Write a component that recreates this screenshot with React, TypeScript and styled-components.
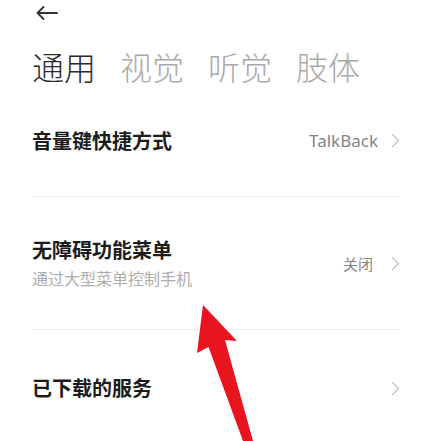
import { createGlobalStyle, styled } from "styled-components";

const GlobalStyle = createGlobalStyle`
  html, body {
    margin: 0;
    padding: 0;
    background: #ffffff;
  }
  body {
    font-family: "Noto Sans", "Noto Sans CJK SC", sans-serif;
    overflow: hidden;
  }
`;

interface TabProps {
  $active?: boolean;
}

const tabs = ["通用", "视觉", "听觉", "肢体"];

const Chevron = () => (
  <svg width="9" height="15" viewBox="0 0 9 15" fill="none">
    <path d="M1.5 1.5 L7.5 7.5 L1.5 13.5" stroke="#c4c4c4" strokeWidth="1.4" strokeLinecap="round" strokeLinejoin="round" />
  </svg>
);

const BackArrow = () => (
  <svg width="24" height="16" viewBox="0 0 24 16" fill="none">
    <path d="M22 8 H2.5 M8.5 2 L2.5 8 L8.5 14" stroke="#333" strokeWidth="1.8" strokeLinecap="round" strokeLinejoin="round" />
  </svg>
);

const App = () => {
  return (
    <>
      <GlobalStyle />
      <S.Page>
        <S.Header>
          <BackArrow />
        </S.Header>
        <S.Tabs>
          {tabs.map((tab, i) => (
            <S.Tab key={tab} $active={i === 0}>
              {tab}
            </S.Tab>
          ))}
        </S.Tabs>
        <S.List>
          <S.Row $height={112}>
            <S.TextBlock>
              <S.Title>音量键快捷方式</S.Title>
            </S.TextBlock>
            <S.Value $gap={13}>
              <S.Latin>TalkBack</S.Latin>
              <Chevron />
            </S.Value>
          </S.Row>
          <S.Row $height={133}>
            <S.TextBlock>
              <S.Title>无障碍功能菜单</S.Title>
              <S.Subtitle>通过大型菜单控制手机</S.Subtitle>
            </S.TextBlock>
            <S.Value $gap={18}>
              关闭
              <Chevron />
            </S.Value>
          </S.Row>
          <S.Row $height={116}>
            <S.TextBlock>
              <S.Title>已下载的服务</S.Title>
            </S.TextBlock>
            <S.Value $gap={0}>
              <Chevron />
            </S.Value>
          </S.Row>
        </S.List>
        <S.Pointer viewBox="0 0 432 441" width="432" height="441">
          <polygon
            points="203,305 237,341 225,340 253,441 243,441 208.5,347 197,353"
            fill="#e8141f"
          />
        </S.Pointer>
      </S.Page>
    </>
  );
};

export default App;

interface RowProps {
  $height: number;
}

interface ValueProps {
  $gap: number;
}

const S = {
  Page: styled.div`
    position: relative;
    width: 432px;
    height: 441px;
    overflow: hidden;
    padding: 0 32px;
    box-sizing: border-box;
  `,
  Header: styled.div`
    height: 26px;
    display: flex;
    align-items: center;
    padding-left: 3px;
  `,
  Tabs: styled.div`
    display: flex;
    flex-direction: row;
    gap: 24px;
    margin-top: 21px;
    height: 38px;
    align-items: center;
  `,
  Tab: styled.div<TabProps>`
    font-family: "Noto Sans CJK SC", sans-serif;
    font-size: 32px;
    line-height: 38px;
    font-weight: 300;
    color: ${(props) => (props.$active ? "#2b2b2b" : "#aaaaaa")};
  `,
  List: styled.div`
    display: flex;
    flex-direction: column;
  `,
  Row: styled.div<RowProps>`
    height: ${(props) => props.$height}px;
    display: flex;
    flex-direction: row;
    align-items: center;
    justify-content: space-between;
    border-bottom: 1px solid #ececec;
    box-sizing: border-box;
    &:last-child {
      border-bottom: none;
    }
  `,
  TextBlock: styled.div`
    display: flex;
    flex-direction: column;
    gap: 4px;
  `,
  Title: styled.div`
    font-family: "Noto Sans CJK SC", sans-serif;
    font-size: 20px;
    line-height: 26px;
    font-weight: 700;
    color: #1c1c1c;
  `,
  Subtitle: styled.div`
    font-family: "Noto Sans CJK SC", sans-serif;
    font-size: 16px;
    line-height: 22px;
    color: #adadad;
  `,
  Value: styled.div<ValueProps>`
    display: flex;
    align-items: center;
    gap: ${(props) => props.$gap}px;
    font-family: "Noto Sans CJK SC", sans-serif;
    font-size: 15px;
    color: #858585;
  `,
  Latin: styled.span`
    font-family: "Noto Sans", sans-serif;
    font-size: 17px;
  `,
  Pointer: styled.svg`
    position: absolute;
    left: 0;
    top: 0;
    pointer-events: none;
  `,
};
